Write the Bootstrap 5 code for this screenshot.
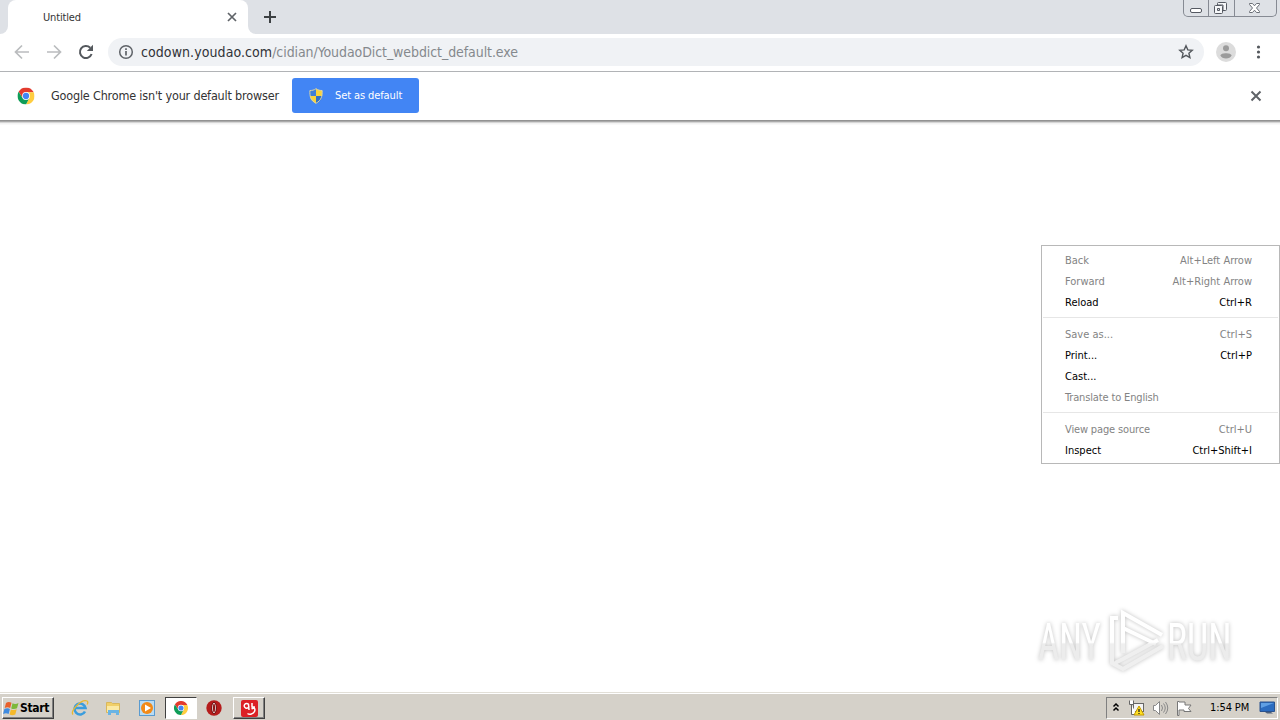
<!DOCTYPE html>
<html lang="en">
<head>
<meta charset="utf-8">
<meta name="viewport" content="width=device-width, initial-scale=1">
<title>Untitled</title>
<link href="https://cdn.jsdelivr.net/npm/bootstrap@5.3.0/dist/css/bootstrap.min.css" rel="stylesheet">
<style>
body{font-family:"DejaVu Sans Condensed","DejaVu Sans",sans-serif;font-stretch:condensed;font-size:11px;line-height:14px;color:#333;height:720px;overflow:hidden;background:#fff}
svg{display:block;flex:none}
.tabstrip{height:34px;background:#dee1e6}
.tab-left{width:8px;background:#fff}
.tab-left i{display:block;height:100%;background:#dee1e6;border-bottom-right-radius:8px}
.tab-active{width:240px;background:#fff;border-radius:8px 8px 0 0;padding:0 10px 0 35px}
.tab-active span{letter-spacing:-.15px;padding-top:1px}
.tab-right{background:#fff}
.tab-right>div{background:#dee1e6;border-bottom-left-radius:8px;padding-left:16px}
.winbtns{width:94px;height:17px;margin-right:3px;border:1px solid #868a93;border-top:0;border-radius:0 0 5px 5px}
.winbtns span+span{border-left:1px solid #868a93}
.win-min{width:24px}
.win-max{width:26px}
.toolbar{height:38px;border-bottom:1px solid #b1b3b6;padding:4px 0 5px 14px}
.omnibox{width:1096px;height:28px;border-radius:14px;background:#f0f2f5;margin-left:14px;padding:0 10px;color:#85898d;font-size:14px}
.omnibox b{font-weight:400;color:#303338;letter-spacing:.08px}
.url{padding-left:7px;letter-spacing:-.08px}
.avatar{margin-left:12px}
.kebab{margin-left:20px}
.infobar{height:48px;padding:0 18px 1px 17px;font-size:12.5px}
.info-txt{margin-left:16px;letter-spacing:-.18px;white-space:nowrap}
.edge{height:5px;background:linear-gradient(#929292 0 1px,#aaa 1px 2px,#d6d6d6 2px 3px,#f3f3f3 3px 4px,#fff)}
.setdefault{width:127px;height:35px;background:#4285f4;color:#fff;border-radius:3px;font-size:11px;line-height:14px;padding:0 0 0 17px;margin-left:auto;border:0}
.prompt{width:402px}
.set-txt{margin-left:12px;letter-spacing:-.1px}
.ctx{position:absolute;left:1041px;top:245px;width:239px;height:219px;border:1px solid #b8b8b8;background:#fff;padding:4px 0;color:#000}
.ctx .ctx-item{height:21px;padding:0 27px 0 23px}
.ctx .off{color:#838383}
.ctx hr{margin:4px 1px 6px;border:0;border-top:1px solid #e6e6e6;opacity:1}
.tight{letter-spacing:-.15px}
.wm{position:absolute;left:1030px;top:602px;filter:drop-shadow(0 0 2px rgba(0,0,0,.25))}
.taskbar{height:28px;background:#d5d1c9;border-top:1px solid #e2dfd7;box-shadow:inset 0 1px #fff;padding:3px 2px 0;color:#000}
.startbtn{width:52px;height:22px;font-weight:700;font-size:12px}
.startbtn span{letter-spacing:-.3px}
.raised{background:#d5d1c9;border:1px solid;border-color:#fff #404040 #404040 #fff;box-shadow:inset -1px -1px #808080}
.sunk{background:#fff;border:1px solid;border-color:#404040 #fff #fff #404040}
.task{height:22px;width:32px}
.launch{gap:16px;margin-left:17px}
.tray{height:22px;width:172px;border:1px solid;border-color:#808080 #fff #fff #808080;padding-left:5px}
.clock{margin-left:18px;letter-spacing:-.1px}
</style>
</head>
<body class="d-flex flex-column position-relative">
<svg width="0" height="0" class="position-absolute"><defs>
<symbol id="chrome" viewBox="0 0 18 18"><path d="M9 5h8.100l-.3-.5A9 9 0 0 0 1.200 4.500L5.400 11z" fill="#e33b2e"/><path d="M9 18A9 9 0 0 0 17.100 5H9l3.500 6z" fill="#ffcd40"/><path d="M1.200 4.500A9 9 0 0 0 9 18l3.500-7H5.400z" fill="#0f9d58"/><circle cx="9" cy="9" r="4.100" fill="#fff"/><circle cx="9" cy="9" r="3.300" fill="#4285f4"/></symbol>
</defs></svg>

<header>
<div class="tabstrip d-flex">
  <div class="tab-left"><i></i></div>
  <div class="tab-active d-flex align-items-center justify-content-between"><span>Untitled</span>
    <svg width="12" height="12" viewBox="0 0 12 12"><path d="M2 2l8 8M10 2l-8 8" stroke="#5f6368" stroke-width="1.700"/></svg></div>
  <div class="tab-right flex-grow-1"><div class="h-100 d-flex justify-content-between">
    <svg class="align-self-center" width="12" height="12" viewBox="0 0 12 12"><path d="M6 0v12M0 6h12" stroke="#3c4043" stroke-width="2"/></svg>
    <div class="winbtns d-flex">
      <span class="win-min"><svg width="24" height="16"><rect x="6.500" y="8.500" width="11" height="4" rx="1.500" fill="#fff" stroke="#555962"/></svg></span>
      <span class="win-max"><svg width="25" height="16" fill="#f6f7f9" stroke="#555962"><path d="M8.500 5V3.500q0-1 1-1h7q1 0 1 1v6q0 1-1 1H14V5z"/><path fill-rule="evenodd" d="M6.500 5.500h6q1 0 1 1v6q0 1-1 1h-6q-1 0-1-1v-6q0-1 1-1zM8.500 8.500v2h2v-2z"/></svg></span>
      <span class="flex-grow-1"><svg width="40" height="16"><path d="M14.500 3.500h3l2 2.300 2-2.300h3v1l-3 3.500 3 3.500v1h-3l-2-2.300-2 2.300h-3v-1l3-3.500-3-3.500z" fill="#fff" stroke="#6b6f77"/></svg></span>
    </div>
  </div></div>
</div>
<div class="toolbar d-flex align-items-center">
  <svg width="16" height="16" viewBox="0 0 16 16" fill="none" stroke="#babcbe" stroke-width="1.700"><path d="M15 8H2M8 1.500 1.500 8 8 14.500"/></svg>
  <svg class="ms-3" width="16" height="16" viewBox="0 0 16 16" fill="none" stroke="#babcbe" stroke-width="1.700"><path d="M1 8h13M8 1.500 14.500 8 8 14.500"/></svg>
  <svg class="ms-3" width="16" height="16" viewBox="0 0 16 16"><path d="M13.600 10A6 6 0 1 1 12.200 3.800" fill="none" stroke="#54585d" stroke-width="2"/><path d="M15 .8V7H8.800z" fill="#54585d"/></svg>
  <div class="omnibox d-flex align-items-center">
    <svg width="16" height="16" viewBox="0 0 16 16"><circle cx="8" cy="8" r="6.300" fill="none" stroke="#5f6368" stroke-width="1.500"/><path d="M8 7v4.500M8 4.300v1.700" stroke="#5f6368" stroke-width="1.700"/></svg>
    <span class="url flex-grow-1"><b>codown.youdao.com</b>/cidian/YoudaoDict_webdict_default.exe</span>
    <svg width="16" height="16" viewBox="0 0 16 16"><path d="M8 1.800l1.800 4.100 4.400.4-3.300 2.900 1 4.400L8 11.300l-3.900 2.300 1-4.400L1.800 6.300l4.400-.4z" fill="none" stroke="#54585d" stroke-width="1.400"/></svg>
  </div>
  <svg class="avatar" width="20" height="20" viewBox="0 0 20 20"><circle cx="10" cy="10" r="10" fill="#dcdcdc"/><circle cx="10" cy="6.300" r="3" fill="#9b9b9b"/><path d="M4.500 13.500c0-3 11-3 11 0-1 4-10 4-11 0z" fill="#9b9b9b"/></svg>
  <svg class="kebab" width="5" height="16" fill="#54585d"><circle cx="2.500" cy="3" r="1.600"/><circle cx="2.500" cy="8" r="1.600"/><circle cx="2.500" cy="13" r="1.600"/></svg>
</div>
<div class="infobar d-flex align-items-center justify-content-between">
  <div class="prompt d-flex align-items-center">
  <svg width="18" height="18" viewBox="-.5 -.5 19 19"><use href="#chrome" width="18" height="18"/></svg>
  <span class="info-txt">Google Chrome isn't your default browser</span>
  <button class="btn setdefault d-flex align-items-center">
    <svg width="14" height="16" viewBox="0 0 14 16"><path d="M7 .5C5 2 3 2.300.8 2.300L.9 8H7z" fill="#3f7fd8"/><path d="M7 .5c2 1.500 4 1.800 6.200 1.800L13.100 8H7z" fill="#f8d33c"/><path d="M.9 8H7v7.500C3 13.500 1.200 11 .9 8z" fill="#f8d33c"/><path d="M13.100 8H7v7.500c4-2 5.800-4.500 6.100-7.500z" fill="#3270c4"/><path d="M7 .7C5 2.200 3 2.500.9 2.500.6 8 1.500 12.300 7 15.300c5.500-3 6.400-7.300 6.100-12.800C11 2.500 9 2.200 7 .7z" fill="none" stroke="#d9d4a8"/></svg>
    <span class="set-txt">Set as default</span></button>
  </div>
  <svg width="12" height="12" viewBox="0 0 12 12"><path d="M1.500 1.500l9 9M10.500 1.500l-9 9" stroke="#5f6368" stroke-width="2"/></svg>
</div>
<div class="edge"></div>
</header>

<main class="flex-grow-1"></main>

<div class="ctx">
  <div class="ctx-item off d-flex align-items-center justify-content-between"><span>Back</span><span>Alt+Left Arrow</span></div>
  <div class="ctx-item off d-flex align-items-center justify-content-between"><span>Forward</span><span>Alt+Right Arrow</span></div>
  <div class="ctx-item d-flex align-items-center justify-content-between"><span>Reload</span><span>Ctrl+R</span></div>
  <hr>
  <div class="ctx-item off d-flex align-items-center justify-content-between"><span>Save as...</span><span>Ctrl+S</span></div>
  <div class="ctx-item d-flex align-items-center justify-content-between"><span>Print...</span><span>Ctrl+P</span></div>
  <div class="ctx-item d-flex align-items-center"><span>Cast...</span></div>
  <div class="ctx-item off d-flex align-items-center"><span class="tight">Translate to English</span></div>
  <hr>
  <div class="ctx-item off d-flex align-items-center justify-content-between"><span class="tight">View page source</span><span>Ctrl+U</span></div>
  <div class="ctx-item d-flex align-items-center justify-content-between"><span>Inspect</span><span>Ctrl+Shift+I</span></div>
</div>

<svg class="wm" width="220" height="80" viewBox="0 0 220 80">
  <defs>
  <linearGradient id="fadeText" gradientUnits="userSpaceOnUse" x1="0" y1="-40" x2="0" y2="0"><stop offset=".56" stop-color="#fff"/><stop offset=".6" stop-color="#ececec"/></linearGradient>
  <linearGradient id="fadeMark" gradientUnits="userSpaceOnUse" x1="0" y1="8" x2="0" y2="70"><stop offset=".52" stop-color="#fff"/><stop offset=".55" stop-color="#efefef"/></linearGradient></defs>
  <g font-family="Roboto, sans-serif" font-size="51" fill="url(#fadeText)">
    <text transform="translate(8 58) scale(.72 1)">ANY</text>
    <text transform="translate(137 58) scale(.74 1)">RUN</text>
  </g>
  <g fill="none" stroke="url(#fadeMark)" stroke-width="4">
    <path d="M93 51V11L132 33M93 26 126 42M88 16H82V61L93 67 133 44M85 61 93 57 128 38"/>
  </g>
</svg>

<footer class="taskbar d-flex align-items-center">
  <div class="startbtn raised d-flex align-items-center">
    <svg width="17" height="17" viewBox="0 0 17 17"><path d="M3 3c2-1.500 4-1 5.500-.2L7.200 8C5.500 7 3.500 7 1.700 8z" fill="#e8602c"/><path d="M9.500 3.300c2 1 4 .8 6-.3L14 8.200c-2 1-4 1-5.800.2z" fill="#7db83a"/><path d="M1.400 9c2-1 3.800-1 5.500-.1L5.600 14c-1.800-.9-3.700-.8-5.500.1z" fill="#3f8be0"/><path d="M7.900 9.400c2 .9 4 .8 5.800-.2l-1.400 5.200c-2 1-4 1-5.700.1z" fill="#f5b92a"/></svg>
    <span>Start</span></div>
  <div class="launch d-flex align-items-center">
    <svg width="18" height="18" viewBox="0 0 18 18"><path d="M14 12.500A5.500 5.500 0 1 1 14.500 9H5" fill="none" stroke="#3a9ddd" stroke-width="2.600"/><path d="M2 15.500C-1 12 10 0 16 2c1 .5.900 2 .2 3.500" fill="none" stroke="#e8b830" stroke-width="1.300"/></svg>
    <svg width="17" height="16" viewBox="0 0 17 16"><path d="M1.500 2.500h5l1 1h7v9h-13z" fill="#f1cf68" stroke="#d9b75c"/><path d="M2 6h12v6H2z" fill="#fbe9a4"/><path d="M3 15v-5h11v5h-3v-2H6v2z" fill="#69b4e4"/></svg>
    <svg width="17" height="17" viewBox="0 0 17 17"><rect x="1.500" y=".5" width="15" height="15" fill="#b9dcf4" stroke="#5a9bd0"/><circle cx="9" cy="8" r="6" fill="#f28a18"/><path d="M7 4.500v7l6-3.500z" fill="#fff"/></svg>
  </div>
  <div class="task sunk d-flex align-items-center justify-content-center" style="margin-left:10px"><svg width="14" height="14"><use href="#chrome"/></svg></div>
  <svg style="margin-left:9px" width="16" height="16" viewBox="0 0 16 16"><circle cx="8" cy="8" r="7.700" fill="#b51c1c"/><ellipse cx="8" cy="8" rx="2.400" ry="5.700" fill="#e9dada" stroke="#6f0a0a"/><ellipse cx="8" cy="8" rx="1" ry="4.200" fill="#8c1010"/></svg>
  <div class="task raised d-flex align-items-center justify-content-center" style="margin-left:11px"><svg width="17" height="17" viewBox="0 0 17 17"><rect width="17" height="17" rx="2" fill="#dc2026"/><path d="M8 6.200A2.400 2.400 0 1 1 7.500 4.300L8 10M11 3v4h3M10.500 9c3-2 4 0 3 2.500s-5 3.500-7 2" fill="none" stroke="#fff" stroke-width="1.500"/></svg></div>

  <div class="tray ms-auto d-flex align-items-center">
    <svg width="8" height="10" viewBox="0 0 8 10" fill="none" stroke="#000" stroke-width="1.500"><path d="M1.500 3.500 4 1l2.500 2.500M1.500 7.500 4 5l2.500 2.500"/></svg>
    <svg style="margin-left:8px" width="17" height="16" viewBox="0 0 17 16"><rect x="5.500" y="3.500" width="10" height="8" fill="#f4f4f4" stroke="#666"/><path d="M1.500.5v4h4v-4M3.500 4.500v10h5" fill="#fff" stroke="#666"/><path d="M11 6l5 9H6z" fill="#ffdf22" stroke="#c49a00"/><path d="M11 9v3M11 13v1" stroke="#222" stroke-width="1.300"/></svg>
    <svg style="margin-left:7px" width="17" height="16" viewBox="0 0 17 16" fill="none" stroke="#888"><path d="M1.500 5.500h2l4-4v13l-4-4h-2z" fill="#fff"/><path d="M9.500 5q2 3 0 6M11.500 3.500q3.500 4.500 0 9M13.500 2q4.500 6 0 12"/></svg>
    <svg style="margin-left:7px" width="16" height="16" viewBox="0 0 16 16"><path d="M1.500 1.500v14h1.500V10h5v1.500h7l-2.500-3 2.500-3.500H9V2H3v-.5z" fill="#fff" stroke="#777"/></svg>
    <span class="clock text-nowrap">1:54 PM</span>
    <svg style="margin-left:10px" width="17" height="14" viewBox="0 0 17 14"><path d="M1 1h14.500v9.500H1z" fill="#2b6cc0" stroke="#2a528e"/><path d="M2 2h13L2 7z" fill="#5f9fe4"/><path d="M6 11h6l2 1.500H8z" fill="#50617a"/></svg>
  </div>
</footer>
<script src="https://cdn.jsdelivr.net/npm/bootstrap@5.3.0/dist/js/bootstrap.bundle.min.js"></script>
</body>
</html>
